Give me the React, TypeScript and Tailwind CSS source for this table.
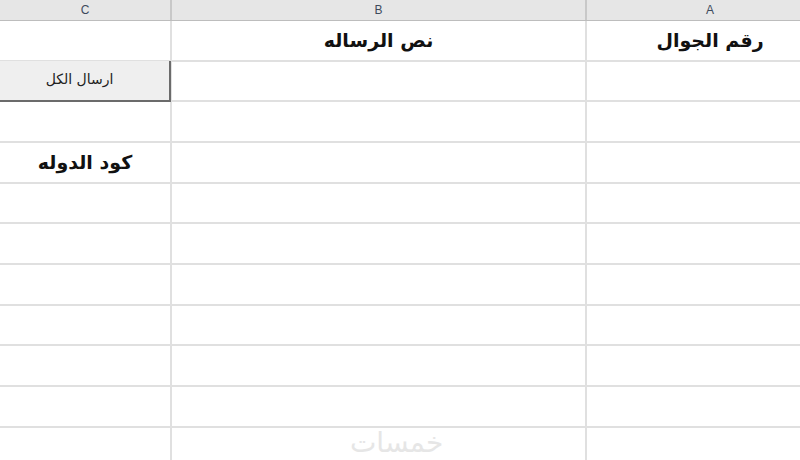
import React from "react";

const ROW_COUNT = 11;

const AR = { fontFamily: '"DejaVu Sans", "Noto Sans", sans-serif' };

function HeaderCell({ label, className = "" }: { label: string; className?: string }) {
  return (
    <div
      className={`flex h-full items-center justify-center text-[12px] text-[#3d4a5c] ${className}`}
      style={{ fontFamily: '"Liberation Sans", Arial, sans-serif' }}
    >
      {label}
    </div>
  );
}

export default function App() {
  const rows = Array.from({ length: ROW_COUNT }, (_, i) => i);

  return (
    <div className="relative h-[460px] w-[800px] overflow-hidden bg-white">
      <div dir="rtl" className="w-[833px]">
        {/* Column letters */}
        <div className="grid h-[21px] grid-cols-[248px_415px_170px] border-b border-[#bdbdbd] bg-[#e6e6e6]">
          <HeaderCell label="A" className="border-l-2 border-[#c8c8c8]" />
          <HeaderCell label="B" className="border-l-2 border-[#c8c8c8]" />
          <HeaderCell label="C" />
        </div>

        {/* Sheet rows */}
        {rows.map((r) => (
          <div
            key={r}
            className="grid h-[40.67px] grid-cols-[248px_415px_170px] border-b-2 border-[#e0e0e0]"
          >
            <div
              className="flex items-center justify-center border-l-2 border-[#e0e0e0] pb-px text-[19px] font-bold text-[#111]"
              style={AR}
            >
              {r === 0 && "رقم الجوال"}
            </div>
            <div
              className="flex items-center justify-center border-l-2 border-[#e0e0e0] pb-px text-[19px] font-bold text-[#111]"
              style={AR}
            >
              {r === 0 && "نص الرساله"}
            </div>
            <div
              className="relative flex items-center justify-center pb-px text-[19px] font-bold text-[#111]"
              style={AR}
            >
              {r === 3 && "كود الدوله"}
              {r === 1 && (
                <button
                  className="absolute -right-px left-0 -top-px -bottom-[2px] flex items-center justify-center border-b-2 border-r-2 border-[#6b6b6b] bg-[#efefef] pb-[2px] pr-[10px] text-[14px] font-normal text-[#222]"
                  style={AR}
                >
                  ارسال الكل
                </button>
              )}
            </div>
          </div>
        ))}
      </div>

      {/* watermark */}
      <div
        className="pointer-events-none absolute left-[350px] top-[422px] text-[28px] text-[#e6e6e6]"
        style={AR}
        dir="rtl"
      >
        خمسات
      </div>
    </div>
  );
}
